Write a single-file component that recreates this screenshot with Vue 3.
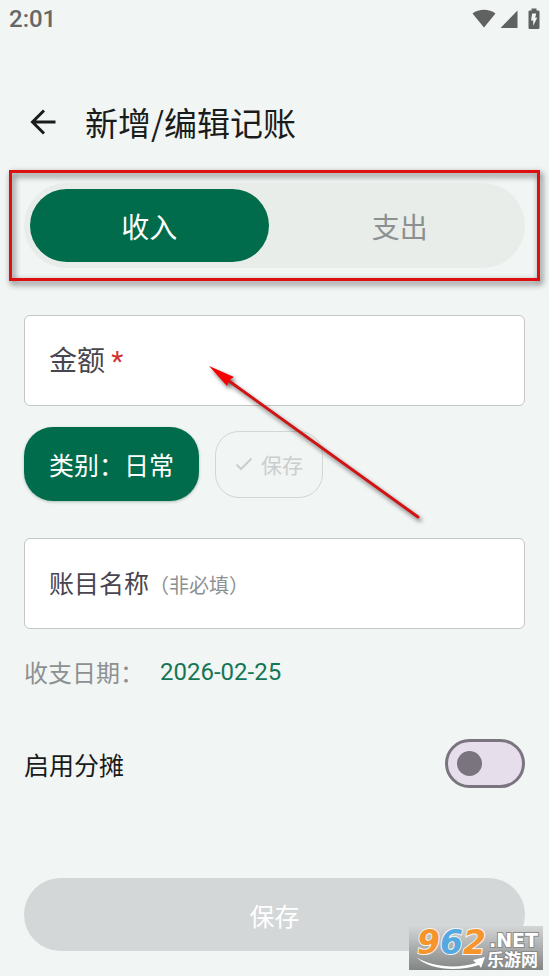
<script setup>
import { ref } from 'vue'

const type = ref('income')
const amount = ref('')
const name = ref('')
const split = ref(false)
const tabs = [
  { key: 'income', label: '收入' },
  { key: 'expense', label: '支出' },
]
</script>

<template>
  <div class="page">
    <div class="status">
      <span>2:01</span>
      <span class="status-icons">
        <svg width="24" height="20" viewBox="0 0 24 20"><path d="M0.5 4.4C7 -0.6 17 -0.6 23.5 4.4L12 18.6Z" /></svg>
        <svg width="18" height="20" viewBox="0 0 18 20"><path d="M17.5 1.5V19H0.5Z" /></svg>
        <svg class="battery" width="12" height="22" viewBox="0 0 12 22">
          <path d="M3.5 0.5h5v2h1.7q1.3 0 1.3 1.3v15.9q0 1.3-1.3 1.3H1.8q-1.3 0-1.3-1.3V3.8q0-1.3 1.3-1.3h1.7z" />
          <path class="bolt" d="M4.2 5.5h4L7.2 9.8h2L5.2 17.8v-5.4H3z" />
        </svg>
      </span>
    </div>

    <header class="header">
      <button class="back" type="button" aria-label="返回">
        <svg width="26" height="26" viewBox="0 0 26 26"><path d="M25.5 13H3M14 1.5L2.5 13L14 24.5" /></svg>
      </button>
      <h1>新增/编辑记账</h1>
    </header>

    <main class="form">
      <div class="segment-box">
        <div class="segment">
          <button
            v-for="t in tabs"
            :key="t.key"
            type="button"
            class="tab"
            :class="{ active: type === t.key }"
            @click="type = t.key"
          >{{ t.label }}</button>
        </div>
        <div class="frame"></div>
      </div>

      <div class="field amount">
        <label class="label-large" for="amount">金额 <span class="star">*</span></label>
        <input id="amount" v-model="amount" type="text" inputmode="decimal" />
        <svg class="pointer" width="230" height="170" viewBox="0 0 230 170">
          <path class="shaft" d="M20 15L209 151" />
          <path class="head" d="M0 0L25 11L20.500 14L18 20Z" />
        </svg>
      </div>

      <div class="chips">
        <button class="category" type="button">类别：日常</button>
        <button class="mini-save" type="button" disabled>
          <svg width="18" height="14" viewBox="0 0 18 14"><path d="M1.500 7.500L6 12L16.500 1.500" /></svg>
          保存
        </button>
      </div>

      <div class="field">
        <label for="name">账目名称<span class="hint">（非必填）</span></label>
        <input id="name" v-model="name" type="text" />
      </div>

      <div class="date-row">
        <span class="date-label">收支日期：</span>
        <button class="date" type="button">2026-02-25</button>
      </div>

      <div class="switch-row">
        <label for="split">启用分摊</label>
        <input id="split" v-model="split" class="switch" type="checkbox" role="switch" />
      </div>

      <button class="save" type="submit" disabled>保存</button>
    </main>

    <div class="badge">
      <svg width="134" height="44" viewBox="0 0 134 44">
        <defs>
          <linearGradient id="badge-bg" x1="0" y1="0" x2="0" y2="1">
            <stop offset="0" stop-color="#d4d6d6" />
            <stop offset="1" stop-color="#838484" />
          </linearGradient>
        </defs>
        <rect width="134" height="44" fill="url(#badge-bg)" />
        <path class="swoosh" d="M7 31C22 41 48 43 67 37L64 34L76 31L72 42L70 39C48 46 20 44 7 31Z" />
        <text class="digits" x="8" y="28"><tspan class="orange">9</tspan><tspan class="blue">6</tspan><tspan class="orange">2</tspan></text>
        <text class="net" x="80" y="21">.NET</text>
        <text class="cn" x="78" y="40">乐游网</text>
      </svg>
    </div>
  </div>
</template>

<style>
body {
  background: #f1f5f4;
}
</style>

<style scoped>
.page {
  position: relative;
  box-sizing: border-box;
  min-height: 100vh;
  padding-bottom: 25px;
  background: #f1f5f4;
  color: #1a1c1b;
  font-family: "Noto Sans CJK SC", sans-serif;
  font-size: 25px;
  line-height: 36px;
}
button,
input {
  margin: 0;
  padding: 0;
  border: 0;
  background: none;
  color: inherit;
  font: inherit;
}
svg {
  display: block;
}
.status {
  display: flex;
  align-items: center;
  justify-content: space-between;
  height: 38px;
  padding: 0 9px;
  color: #656867;
  font-family: Roboto, sans-serif;
  font-size: 24px;
  font-weight: 500;
}
.status-icons {
  display: flex;
  align-items: center;
  gap: 4px;
  fill: #5f6261;
}
.battery {
  margin-left: 6px;
}
.bolt {
  fill: #f1f5f4;
}
.header {
  display: flex;
  align-items: center;
  gap: 29px;
  height: 48px;
  margin-top: 60px;
  padding: 0 30px;
}
.back svg {
  fill: none;
  stroke: #1a1c1b;
  stroke-width: 3;
}
h1 {
  margin: 0;
  font-size: 33px;
  font-weight: 400;
  line-height: 48px;
}
.form {
  display: flex;
  flex-direction: column;
  padding: 37px 24px 0;
}
.segment-box {
  position: relative;
}
.segment {
  display: flex;
  gap: 12px;
  padding: 6px;
  border-radius: 43px;
  background: #e8ede9;
}
.tab {
  flex: 1;
  height: 73px;
  border-radius: 37px;
  color: #8d9091;
  font-size: 28px;
}
.tab.active {
  background: #006c4c;
  color: #fff;
}
.frame {
  position: absolute;
  inset: -13px -15px;
  border: 3px solid #dc1010;
  filter: drop-shadow(2px 3px 3px rgba(0, 0, 0, 0.65));
  pointer-events: none;
}
.field {
  display: flex;
  align-items: center;
  gap: 8px;
  box-sizing: border-box;
  height: 91px;
  padding: 0 24px;
  border: 1px solid #c3c6c5;
  border-radius: 6px;
  background: #fff;
  color: #49454f;
}
.field input {
  flex: 1;
  min-width: 0;
  height: 60px;
  outline: none;
}
.amount {
  position: relative;
  margin-top: 47px;
}
.label-large {
  font-size: 28px;
}
.star {
  color: #d32f2f;
  font-family: Roboto, sans-serif;
}
.hint {
  color: #8d9091;
  font-size: 20px;
}
.pointer {
  position: absolute;
  z-index: 1;
  top: 50px;
  left: 184px;
  overflow: visible;
  filter: drop-shadow(2px 3px 2px rgba(0, 0, 0, 0.55));
  pointer-events: none;
}
.shaft {
  fill: none;
  stroke: #d01414;
  stroke-width: 3;
  stroke-linecap: round;
}
.head {
  fill: #f80000;
}
.chips {
  display: flex;
  align-items: center;
  gap: 16px;
  margin: 21px 0 37px;
}
.category {
  height: 74px;
  padding: 0 25px;
  border-radius: 29px;
  background: #006c4c;
  box-shadow: 0 1px 3px rgba(0, 60, 40, 0.3);
  color: #fff;
}
.mini-save {
  display: flex;
  align-items: center;
  gap: 8px;
  height: 67px;
  padding: 0 19px;
  border: 1px solid #d3d6d5;
  border-radius: 24px;
  color: #cbcecd;
  font-size: 21px;
}
.mini-save svg {
  fill: none;
  stroke: #cbcecd;
  stroke-width: 2;
}
.date-row {
  display: flex;
  align-items: center;
  gap: 16px;
  margin-top: 25px;
}
.date-label {
  color: #8d9091;
  font-size: 24px;
}
.date {
  color: #167554;
  font-family: Roboto, sans-serif;
  font-size: 24px;
}
.switch-row {
  display: flex;
  align-items: center;
  justify-content: space-between;
  margin: 49px 0 90px;
}
.switch {
  display: flex;
  align-items: center;
  box-sizing: border-box;
  width: 80px;
  height: 49px;
  padding: 0 9px;
  border: 3px solid #79747e;
  border-radius: 25px;
  background: #e6deeb;
  appearance: none;
}
.switch::before {
  content: "";
  width: 25px;
  height: 25px;
  border-radius: 50%;
  background: #79747e;
}
.switch:checked {
  justify-content: flex-end;
}
.save {
  height: 73px;
  border-radius: 37px;
  background: #d3d7d7;
  color: #fff;
}
.badge {
  position: absolute;
  right: 6px;
  bottom: 6px;
}
.badge svg {
  overflow: visible;
}
.digits {
  font: italic bold 33px "DejaVu Sans", sans-serif;
  stroke: #f4f4f4;
  stroke-width: 2;
  paint-order: stroke;
}
.orange {
  fill: #f5952c;
}
.blue {
  fill: #55a8e0;
}
.net,
.cn {
  fill: #fff;
  stroke: #8a8b8b;
  stroke-width: 2;
  paint-order: stroke;
}
.net {
  font: bold 19px "DejaVu Sans", sans-serif;
}
.cn {
  font: bold 17px "Noto Sans CJK SC", sans-serif;
}
.swoosh {
  fill: #fff;
}
</style>
